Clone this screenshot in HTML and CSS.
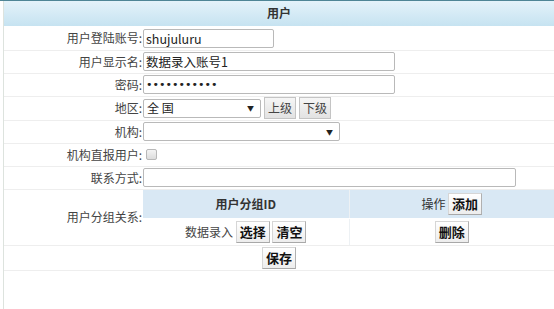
FILE: index.html
```html
<!DOCTYPE html>
<html lang="zh-CN">
<head>
    <meta charset="UTF-8" />
    <title>用户</title>
    <link rel="stylesheet" href="styles.css">
</head>
<body>
    <div class="page">
        <table class="form-table">
            <tr>
                <th colspan="2" class="title">用户</th>
            </tr>
            <tr class="tall">
                <td class="label">用户登陆账号:</td>
                <td class="field"><input class="txt w-short" type="text" value="shujuluru"></td>
            </tr>
            <tr>
                <td class="label">用户显示名:</td>
                <td class="field"><input class="txt w-mid" type="text" value="数据录入账号1"></td>
            </tr>
            <tr>
                <td class="label">密码:</td>
                <td class="field"><input class="txt pwd w-mid" type="password" value="12345678901"></td>
            </tr>
            <tr class="tall">
                <td class="label">地区:</td>
                <td class="field">
                    <div class="inline">
                        <div class="select w-area"><span>全 国</span><i>▼</i></div>
                        <button class="btn light">上级</button>
                        <button class="btn light">下级</button>
                    </div>
                </td>
            </tr>
            <tr>
                <td class="label">机构:</td>
                <td class="field"><div class="select w-org"><span></span><i>▼</i></div></td>
            </tr>
            <tr>
                <td class="label">机构直报用户:</td>
                <td class="field"><span class="check"></span></td>
            </tr>
            <tr>
                <td class="label">联系方式:</td>
                <td class="field"><input class="txt w-long" type="text" value=""></td>
            </tr>
            <tr>
                <td class="label">用户分组关系:</td>
                <td class="field">
                    <table class="group-table">
                        <tr class="group-head">
                            <th class="col-id">用户分组ID</th>
                            <th class="col-op"><span class="mid">操作</span> <button class="btn">添加</button></th>
                        </tr>
                        <tr>
                            <td class="col-id"><span class="mid">数据录入</span> <button class="btn">选择</button> <button class="btn">清空</button></td>
                            <td class="col-op"><button class="btn">删除</button></td>
                        </tr>
                    </table>
                </td>
            </tr>
            <tr>
                <td colspan="2" class="actions"><button class="btn">保存</button></td>
            </tr>
        </table>
    </div>
</body>
</html>
```

FILE: styles.css
```css
* {
    margin: 0;
    padding: 0;
    box-sizing: border-box;
}

body {
    font-family: "Noto Sans CJK SC", "Liberation Sans", sans-serif;
    font-size: 12px;
    line-height: 16px;
    color: #333;
    background: #fff;
    height: 309px;
    overflow: hidden;
    border-top: 1px solid #4f8596;
}

.page {
    margin-left: 3px;
    border-left: 1px solid #dde3de;
    height: 100%;
}

.form-table {
    width: 100%;
    border-collapse: collapse;
}

.form-table td {
    border-bottom: 1px solid #eeeeee;
    height: 23px;
    vertical-align: middle;
}

.form-table .tall td {
    height: 24px;
}

.title {
    height: 25px;
    background: linear-gradient(#e4f2fa, #c6e3f1);
    border-bottom: 1px solid #fff;
    font-weight: bold;
    font-size: 12px;
    color: #333;
    text-align: center;
}

.label {
    width: 139px;
    text-align: right;
    padding-right: 1px;
    white-space: nowrap;
    color: #444;
}

.field {
    padding: 0;
}

.txt {
    display: block;
    height: 19px;
    border: 1px solid #b9b9b9;
    border-radius: 2px;
    padding: 0 2px;
    font-family: "Noto Sans CJK SC", "Liberation Sans", sans-serif;
    font-size: 12.5px;
    color: #222;
}

.txt.pwd {
    font-family: "DejaVu Sans", sans-serif;
    font-size: 11px;
}

.w-short { width: 131px; }
.w-mid { width: 252px; }
.w-long { width: 373px; }

.inline {
    display: flex;
    align-items: center;
    gap: 3px;
}

.select {
    display: flex;
    align-items: center;
    justify-content: space-between;
    height: 19px;
    border: 1px solid #b9b9b9;
    border-radius: 2px;
    padding: 0 6px 0 3px;
    background: #fff;
    color: #222;
}

.select i {
    font-style: normal;
    font-size: 7px;
    color: #222;
}

.w-area { width: 118px; }
.w-org { width: 197px; }

.btn {
    height: 22px;
    padding: 0 3px;
    border: 1px solid #d6d6d6;
    border-right-color: #b0b0b0;
    border-bottom-color: #a8a8a8;
    background: linear-gradient(#ffffff, #ededed);
    font-family: "Noto Sans CJK SC", sans-serif;
    font-size: 13px;
    line-height: 18px;
    font-weight: bold;
    color: #111;
    vertical-align: middle;
}

.btn.light {
    width: 32px;
    font-weight: normal;
    font-size: 12px;
    color: #444;
    background: linear-gradient(#f6f6f6, #e2e2e2);
    border-color: #c4c4c4;
}

.mid {
    vertical-align: middle;
}

.check {
    display: block;
    width: 11px;
    height: 11px;
    margin-left: 3px;
    border: 1px solid #b8b8b8;
    border-radius: 2px;
    background: linear-gradient(#f4f4f4, #dcdcdc);
}

.group-table {
    width: 100%;
    border-collapse: collapse;
}

.group-table th,
.group-table td {
    text-align: center;
    border: none;
}

.group-head th {
    height: 29px;
    background: #d9e8f4;
    font-weight: bold;
    color: #333;
    border-bottom: 1px solid #fff;
}

.group-table .col-id {
    width: 206px;
    border-right: 1px solid #edf1f4;
}

.group-table td {
    height: 26px;
    color: #444;
}

.group-head .col-op {
    font-weight: normal;
}

.form-table .actions {
    height: 25px;
    text-align: center;
}
```
